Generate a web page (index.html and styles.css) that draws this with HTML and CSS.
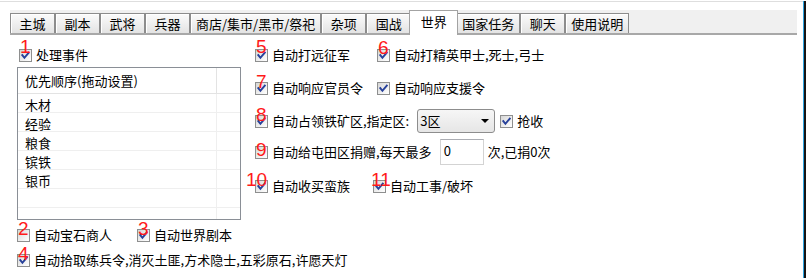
FILE: index.html
```html
<!DOCTYPE html>
<html lang="zh-CN">
<head>
<meta charset="utf-8">
<title>世界</title>
<link rel="stylesheet" href="styles.css">
</head>
<body>
<div class="window">
  <div class="frame">
    <div class="topline"></div>
    <div class="tabstrip">
      <div class="tab">主城</div>
      <div class="tab">副本</div>
      <div class="tab">武将</div>
      <div class="tab">兵器</div>
      <div class="tab">商店/集市/黑市/祭祀</div>
      <div class="tab">杂项</div>
      <div class="tab">国战</div>
      <div class="tab active">世界</div>
      <div class="tab">国家任务</div>
      <div class="tab">聊天</div>
      <div class="tab">使用说明</div>
    </div>
    <div class="content">
      <div class="leftcol">
        <div class="row">
          <label class="opt first">
            <span class="cbw"><span class="cb"><svg viewBox="0 0 11 11" width="11" height="11"><path class="tick" d="M2.3 5.2 L4.4 7.8 L8.8 2.6"/></svg></span><span class="num n1">1</span></span>
            <span>处理事件</span>
          </label>
        </div>
        <div class="listbox">
          <div class="lb-head"><div class="c1">优先顺序(拖动设置)</div><div class="c2"></div></div>
          <div class="lb-row"><div class="c1">木材</div><div class="c2"></div></div>
          <div class="lb-row"><div class="c1">经验</div><div class="c2"></div></div>
          <div class="lb-row"><div class="c1">粮食</div><div class="c2"></div></div>
          <div class="lb-row"><div class="c1">镔铁</div><div class="c2"></div></div>
          <div class="lb-row"><div class="c1">银币</div><div class="c2"></div></div>
          <div class="lb-row"><div class="c1"></div><div class="c2"></div></div>
          <div class="lb-row"><div class="c1"></div><div class="c2"></div></div>
        </div>
        <div class="row r2">
          <label class="opt w120">
            <span class="cbw"><span class="cb"></span><span class="num n2">2</span></span>
            <span>自动宝石商人</span>
          </label>
          <label class="opt">
            <span class="cbw"><span class="cb"><svg viewBox="0 0 11 11" width="11" height="11"><path class="tick" d="M2.3 5.2 L4.4 7.8 L8.8 2.6"/></svg></span><span class="num n3">3</span></span>
            <span>自动世界剧本</span>
          </label>
        </div>
        <div class="row r4">
          <label class="opt">
            <span class="cbw"><span class="cb"><svg viewBox="0 0 11 11" width="11" height="11"><path class="tick" d="M2.3 5.2 L4.4 7.8 L8.8 2.6"/></svg></span><span class="num n4">4</span></span>
            <span>自动拾取练兵令,消灭土匪,方术隐士,五彩原石,许愿天灯</span>
          </label>
        </div>
      </div>
      <div class="rightcol">
        <div class="row">
          <label class="opt w122">
            <span class="cbw"><span class="cb"><svg viewBox="0 0 11 11" width="11" height="11"><path class="tick" d="M2.3 5.2 L4.4 7.8 L8.8 2.6"/></svg></span><span class="num n5">5</span></span>
            <span>自动打远征军</span>
          </label>
          <label class="opt">
            <span class="cbw"><span class="cb"><svg viewBox="0 0 11 11" width="11" height="11"><path class="tick" d="M2.3 5.2 L4.4 7.8 L8.8 2.6"/></svg></span><span class="num n6">6</span></span>
            <span>自动打精英甲士,死士,弓士</span>
          </label>
        </div>
        <div class="row r7">
          <label class="opt w122">
            <span class="cbw"><span class="cb"><svg viewBox="0 0 11 11" width="11" height="11"><path class="tick" d="M2.3 5.2 L4.4 7.8 L8.8 2.6"/></svg></span><span class="num n7">7</span></span>
            <span>自动响应官员令</span>
          </label>
          <label class="opt">
            <span class="cbw"><span class="cb"><svg viewBox="0 0 11 11" width="11" height="11"><path class="tick" d="M2.3 5.2 L4.4 7.8 L8.8 2.6"/></svg></span></span>
            <span>自动响应支援令</span>
          </label>
        </div>
        <div class="row r8">
          <label class="opt">
            <span class="cbw"><span class="cb"><svg viewBox="0 0 11 11" width="11" height="11"><path class="tick" d="M2.3 5.2 L4.4 7.8 L8.8 2.6"/></svg></span><span class="num n8">8</span></span>
            <span>自动占领铁矿区,指定区:</span>
          </label>
          <div class="combo"><span>3区</span><span class="arrow"></span></div>
          <label class="opt grab">
            <span class="cbw"><span class="cb"><svg viewBox="0 0 11 11" width="11" height="11"><path class="tick" d="M2.3 5.2 L4.4 7.8 L8.8 2.6"/></svg></span></span>
            <span>抢收</span>
          </label>
        </div>
        <div class="row r9">
          <label class="opt">
            <span class="cbw"><span class="cb"></span><span class="num n9">9</span></span>
            <span>自动给屯田区捐赠,每天最多</span>
          </label>
          <div class="numinput">0</div>
          <span class="after">次,已捐0次</span>
        </div>
        <div class="row r10">
          <label class="opt w118">
            <span class="cbw"><span class="cb"><svg viewBox="0 0 11 11" width="11" height="11"><path class="tick" d="M2.3 5.2 L4.4 7.8 L8.8 2.6"/></svg></span><span class="num n10">10</span></span>
            <span>自动收买蛮族</span>
          </label>
          <label class="opt">
            <span class="cbw"><span class="cb"><svg viewBox="0 0 11 11" width="11" height="11"><path class="tick" d="M2.3 5.2 L4.4 7.8 L8.8 2.6"/></svg></span><span class="num n11">11</span></span>
            <span>自动工事/破坏</span>
          </label>
        </div>
      </div>
    </div>
  </div>
</div>
</body>
</html>
```

FILE: styles.css
```css
* { box-sizing: border-box; }
html, body { margin: 0; padding: 0; background: #fff; }
body {
  font-family: "Noto Sans CJK SC", "Noto Sans", sans-serif;
  font-size: 13px;
  color: #000;
}
.window {
  width: 806px;
  height: 278px;
  border-right: 2px solid #141414;
}
.frame {
  height: 100%;
  border-right: 1px solid #2ea3e0;
}
.topline {
  margin-top: 1px;
  height: 1px;
  background: #dedede;
}
.tabstrip {
  margin: 8px 0 0 10px;
  width: 787px;
  height: 25px;
  background: #f0f0f0;
  border-bottom: 2px solid #a8a8a8;
  display: flex;
  align-items: flex-end;
}
.tab {
  height: 20px;
  min-width: 45px;
  padding: 0 5px;
  border: 1px solid #8c8c8c;
  border-bottom: none;
  background: linear-gradient(#fbfbfb, #e3e3e3);
  box-shadow: inset 1px 1px 0 #fff;
  line-height: 19px;
  text-align: center;
  white-space: nowrap;
}
.tab.active {
  position: relative;
  z-index: 1;
  height: 25px;
  min-width: 49px;
  margin: 0 -2px -2px;
  background: #fff;
  border-color: #a3a3a3;
  box-shadow: none;
  line-height: 22px;
}
.content {
  display: flex;
  padding: 10px 0 0 17px;
}
.leftcol { width: 224px; }
.rightcol { margin-left: 14px; }
.row {
  display: flex;
  align-items: center;
  height: 20px;
  white-space: nowrap;
}
.opt {
  display: flex;
  align-items: center;
  gap: 4px;
  line-height: 20px;
}
.opt.first { margin-left: 2px; }
.w118 { width: 118px; }
.w120 { width: 120px; }
.w122 { width: 122px; }
.cbw {
  position: relative;
  width: 13px;
  height: 13px;
  flex: none;
}
.cb {
  display: block;
  width: 13px;
  height: 13px;
  border: 1px solid #8e8f8f;
  background: linear-gradient(135deg, #d6d6d6, #f4f4f4 70%, #fff);
}
.cb svg { display: block; }
.tick {
  fill: none;
  stroke: #26409a;
  stroke-width: 1.9;
  stroke-linecap: square;
}
.num {
  position: absolute;
  left: 1px;
  top: -10px;
  font-family: "Liberation Sans", Arial, sans-serif;
  font-size: 19px;
  line-height: 19px;
  color: #ff1a1a;
}
.n1, .n5 { top: -12px; }
.n6 { top: -11px; }
.n9 { top: -6px; }
.n10 { left: -9px; }
.n11 { left: -2px; }
.listbox {
  margin-top: 2px;
  height: 153px;
  border: 1px solid #8a8f96;
  overflow: hidden;
}
.lb-head {
  display: flex;
  height: 26px;
  border-bottom: 1px solid #e3e3e3;
}
.lb-head .c1 {
  width: 199px;
  padding-left: 7px;
  line-height: 25px;
  border-right: 1px solid #e3e3e3;
}
.lb-row {
  display: flex;
  height: 19px;
  border-bottom: 1px solid #efefef;
}
.lb-row .c1 {
  width: 199px;
  padding: 2px 0 0 7px;
  line-height: 17px;
  border-right: 1px solid #efefef;
}
.r2 { margin-top: 5px; }
.r4 { margin-top: 5px; }
.r7 { margin-top: 13px; }
.r8 { margin-top: 11px; height: 24px; }
.r9 { margin-top: 6px; height: 26px; }
.r10 { margin-top: 11px; }
.combo {
  margin-left: 8px;
  width: 78px;
  height: 24px;
  border: 1px solid #8d8d8d;
  border-radius: 3px;
  background: linear-gradient(#f6f6f6, #e6e6e6);
  display: flex;
  align-items: center;
  justify-content: space-between;
  padding: 0 5px 0 2px;
  line-height: 20px;
}
.arrow {
  width: 0;
  height: 0;
  border-left: 4px solid transparent;
  border-right: 4px solid transparent;
  border-top: 4px solid #000;
}
.opt.grab { margin-left: 5px; }
.numinput {
  margin-left: 8px;
  width: 44px;
  height: 26px;
  border: 1px solid #d3d3d3;
  border-top-color: #abadb3;
  padding: 1px 0 0 3px;
  line-height: 20px;
  background: #fff;
}
.after { margin-left: 4px; line-height: 20px; }
```
